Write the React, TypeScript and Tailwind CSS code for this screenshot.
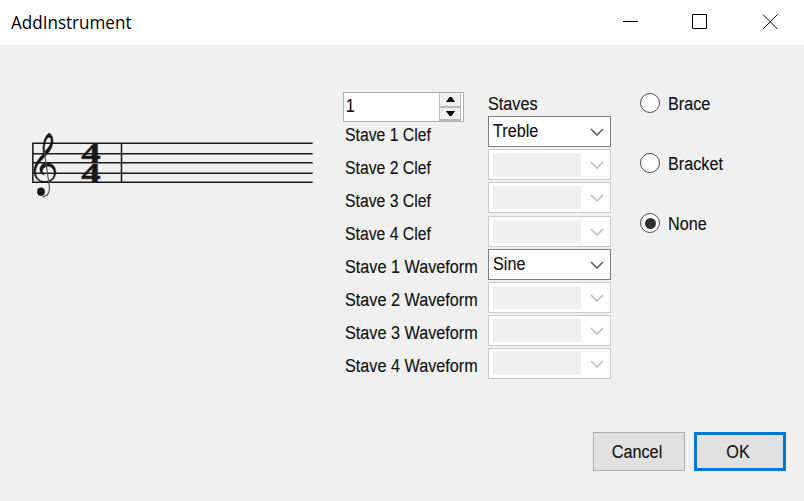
import React from "react";

const text = "inline-block origin-left whitespace-pre text-[18px] leading-[20px] [-webkit-text-stroke:0.15px_#111]";

const rows = [
  { label: "Stave 1 Clef", value: "Treble" },
  { label: "Stave 2 Clef", value: "" },
  { label: "Stave 3 Clef", value: "" },
  { label: "Stave 4 Clef", value: "" },
  { label: "Stave 1 Waveform", value: "Sine" },
  { label: "Stave 2 Waveform", value: "" },
  { label: "Stave 3 Waveform", value: "" },
  { label: "Stave 4 Waveform", value: "" },
];

function TitleBar() {
  return (
    <header className="flex h-[45px] justify-between bg-white pl-[11px] pr-[25px]">
      <h1 className="origin-left scale-x-[0.948] pt-[10px] font-['Open_Sans',sans-serif] text-[18px] leading-[25px] text-black">
        AddInstrument
      </h1>
      <div className="flex gap-[54px] pt-[14px]">
        <svg width="16" height="16" stroke="#000" fill="none" className="translate-x-px">
          <path d="M0 7.5H15" />
        </svg>
        <svg width="16" height="16" stroke="#000" fill="none">
          <path d="M.5.5H14.5V14.5H.5Z" />
        </svg>
        <svg width="17" height="16" stroke="#000" fill="none">
          <path d="M1 .5L15.5 15M15.5 .5L1 15" />
        </svg>
      </div>
    </header>
  );
}

function Score() {
  return (
    <svg width="300" height="90" viewBox="0 0 900 270" className="shrink-0">
      <g stroke="#1c1c1c" strokeWidth="4.6" fill="none">
        <path d="M37 70H878M37 101H878M37 128H878M37 160H878M37 187H878M38.500 68V189M304.500 68V189" />
      </g>
      <g fill="#161616" stroke="#161616" strokeWidth="1.5">
        <path d="M70 101C66 77 72 50 87 39C97 44 101 57 98 72C94 93 79 105 64 121C49 137 44 151 49 167C54 181 69 187 84 183C99 179 106 165 101 151C96 139 84 136 74 142C65 148 65 159 73 165C61 162 56 149 63 138C72 124 92 126 102 139C113 154 107 177 91 184C69 193 45 182 42 158C40 136 53 119 70 101ZM74 95C85 84 95 72 93 58C91 49 84 50 79 59C74 69 72 82 74 95Z" />
        <path d="M72 88L88 198C91 216 82 230 67 231" fill="none" stroke="#555" strokeWidth="3.500" />
        <ellipse cx="63" cy="215" rx="11" ry="12" />
      </g>
      <g
        fill="#161616"
        stroke="#161616"
        strokeOpacity="0.5"
        strokeWidth="3"
        className="font-['Liberation_Serif',serif] text-[84px] leading-none font-bold"
      >
        <text x="184" y="127" textLength="58" lengthAdjust="spacingAndGlyphs">4</text>
        <text x="184" y="186" textLength="58" lengthAdjust="spacingAndGlyphs">4</text>
      </g>
    </svg>
  );
}

function Spinner() {
  return (
    <div className="-ml-[2px] flex h-[30px] w-[121px] justify-between border border-[#abadb3] bg-white">
      <span className={`${text} scale-x-[0.9] pl-[2px] pt-[3px]`}>1</span>
      <div className="mr-[2px] flex w-[22px] flex-col gap-[2px] bg-[#b8b8b8] px-px">
        <div className="flex h-[13px] items-center justify-center bg-[#f0f0f0]">
          <svg width="9" height="5"><path d="M0 5L3.500 0H5.500L9 5Z" /></svg>
        </div>
        <div className="mb-[2px] flex flex-1 items-center justify-center bg-[#f0f0f0]">
          <svg width="9" height="5"><path d="M0 0L3.500 5H5.500L9 0Z" /></svg>
        </div>
      </div>
    </div>
  );
}

function Combo({ value }: { value: string }) {
  const on = value !== "";
  return (
    <div
      className={`flex h-[31px] w-[123px] items-start justify-between border bg-white pl-[4px] pr-[6px] ${
        on ? "border-[#7f7f7f]" : "border-[#cccccc]"
      }`}
    >
      {on ? (
        <span className={`${text} mt-[4px] scale-x-[0.9]`}>{value}</span>
      ) : (
        <span className="mt-[3px] h-[23px] w-[88px] bg-[#f0f0f0]" />
      )}
      <svg width="14" height="8" className="mt-[11px]" fill="none" stroke={on ? "#606060" : "#bdbdbd"} strokeWidth="1.600">
        <path d="M1 1L7 7L13 1" />
      </svg>
    </div>
  );
}

function Radio({ label, checked }: { label: string; checked?: boolean }) {
  return (
    <label className="flex h-[20px] items-center gap-[8px]">
      <span className="flex size-[20px] items-center justify-center rounded-full border-[1.500px] border-[#4a4a4a] bg-white">
        {checked && <span className="size-[11px] rounded-full bg-[#303030]" />}
      </span>
      <span className={`${text} scale-x-[0.9] pt-px`}>{label}</span>
    </label>
  );
}

export default function App() {
  return (
    <div className="flex h-[501px] w-[804px] flex-col bg-[#f0f0f0] font-['Liberation_Sans',Arial,sans-serif] text-[#111]">
      <TitleBar />
      <main className="flex h-[387px] items-start pl-[20px]">
        <div className="flex pt-[75px]">
          <Score />
        </div>
        <section className="ml-[25px] w-[143px] pt-[47px]">
          <Spinner />
          <div className="flex flex-col gap-[13px] pt-[2px]">
            {rows.map((r) => (
              <div key={r.label} className="-ml-[0.5px] h-[20px]">
                <span className={`${text} ${r.label.endsWith("Clef") ? "scale-x-[0.875]" : "scale-x-[0.9]"}`}>
                  {r.label}
                </span>
              </div>
            ))}
          </div>
        </section>
        <section className="w-[123px] pt-[48px]">
          <div className="h-[23px]">
            <span className={`${text} scale-x-[0.9]`}>Staves</span>
          </div>
          <div className="flex flex-col gap-[2.18px]">
            {rows.map((r) => (
              <Combo key={r.label} value={r.value} />
            ))}
          </div>
        </section>
        <section className="ml-[29px] flex flex-col gap-[40px] pt-[48px]">
          <Radio label="Brace" />
          <Radio label="Bracket" />
          <Radio label="None" checked />
        </section>
      </main>
      <footer className="flex justify-end gap-[9px] pr-[18px]">
        <button className="flex h-[39px] w-[92px] items-center justify-center border border-[#adadad] bg-[#e1e1e1] pr-[4px]">
          <span className="scale-x-[0.9] text-[18px] leading-[20px] [-webkit-text-stroke:0.15px_#111]">Cancel</span>
        </button>
        <button className="flex h-[39px] w-[92px] items-center justify-center border-[3px] border-[#0078d7] bg-[#e1e1e1] pr-[4px]">
          <span className="scale-x-[0.9] text-[18px] leading-[20px] [-webkit-text-stroke:0.15px_#111]">OK</span>
        </button>
      </footer>
    </div>
  );
}
